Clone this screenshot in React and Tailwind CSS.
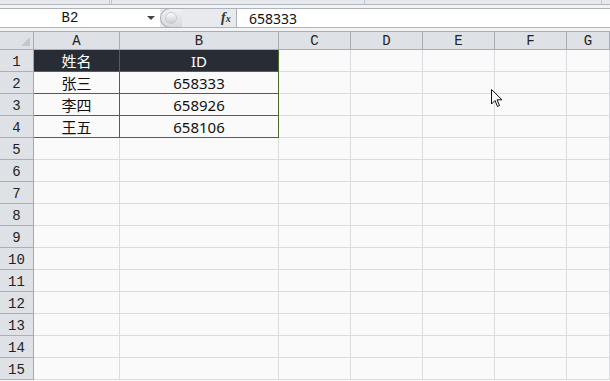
import React from "react";

const COLS = [
  { k: "A", w: "w-[86px]" },
  { k: "B", w: "w-[159px]" },
  { k: "C", w: "w-[72px]" },
  { k: "D", w: "w-[72px]" },
  { k: "E", w: "w-[72px]" },
  { k: "F", w: "w-[72px]" },
  { k: "G", w: "flex-1" },
];

const DATA = {
  1: ["姓名", "ID"],
  2: ["张三", "658333"],
  3: ["李四", "658926"],
  4: ["王五", "658106"],
};

const mono = { fontFamily: '"Liberation Mono", "DejaVu Sans Mono", monospace' };
const cjk = { fontFamily: '"Noto Sans", "Noto Sans CJK SC", sans-serif' };

function Row({ r }) {
  const inTable = r >= 1 && r <= 4;
  return (
    <div className="flex h-[22px] shrink-0">
      <div
        className="w-[34px] shrink-0 bg-[#dee2e7] border-r border-b border-r-[#a3a9b1] border-b-[#aab0b8] flex items-end justify-center pb-[1px] text-[14px] leading-[16px] text-[#222]"
        style={mono}
      >
        {r}
      </div>
      {COLS.map((c, i) => {
        const tbl = inTable && i < 2;
        const right = tbl || (inTable && i === 1);
        const bottomGreen = tbl;
        const header = r === 1 && i < 2;
        return (
          <div
            key={c.k}
            className={[
              c.w,
              "shrink-0 border-r border-b flex items-center justify-center text-[15px] leading-[20px]",
              right ? "border-r-[#4c6b26]" : "border-r-[#dadce0]",
              bottomGreen ? "border-b-[#4c6b26]" : "border-b-[#dadce0]",
              header ? "bg-[#282c34] text-white" : "bg-[#fafafa] text-[#111]",
            ].join(" ")}
            style={cjk}
          >
            {tbl ? DATA[r][i] : null}
          </div>
        );
      })}
    </div>
  );
}

export default function App() {
  const rows = Array.from({ length: 15 }, (_, i) => i + 1);
  return (
    <div className="relative w-[610px] h-[381px] overflow-hidden bg-[#fafafa] flex flex-col">
      {/* top strip */}
      <div className="h-[5px] shrink-0 bg-[#e6e8ec] border-b border-[#b3b8bf] flex">
        <div className="w-[110px] border-r border-[#c3c7cd]" />
        <div className="w-[2px] border-r border-[#c3c7cd]" />
        <div className="w-[253px] border-r border-[#c3c7cd]" />
        <div className="w-[237px] border-r border-[#c3c7cd]" />
      </div>
      <div className="h-[3px] shrink-0 bg-[#f2f3f5]" />
      {/* formula bar */}
      <div className="h-[20px] shrink-0 flex border-t border-b border-[#aeb3ba] bg-[#f5f6f7]">
        <div className="w-[160px] shrink-0 bg-white flex items-center relative">
          <span className="w-[140px] text-center text-[14px] text-[#111]" style={mono}>
            B2
          </span>
          <svg width="8" height="5" viewBox="0 0 8 5" className="absolute left-[147px] top-[7px]">
            <path d="M0 0 L8 0 L4 4 Z" fill="#444" />
          </svg>
        </div>
        <div className="w-[77px] shrink-0 relative flex items-center bg-[#e8eaed]">
          <div className="absolute left-0 top-[-1px] h-[20px] w-[22px] rounded-l-full border border-r-0 border-[#a9aeb5] bg-gradient-to-b from-[#f1f2f4] to-[#d6d9de] flex items-center pl-[4px]">
            <div className="w-[12px] h-[12px] rounded-full bg-gradient-to-b from-[#fdfdfd] to-[#c9ccd1] border border-[#c7cad0]" />
          </div>
          <span
            className="absolute left-[61px] top-[0px] text-[14px] italic font-bold text-[#333] leading-[18px]"
            style={{ fontFamily: '"Liberation Serif", serif' }}
          >
            f<span className="text-[10px]">x</span>
          </span>
          <div className="absolute right-0 top-0 bottom-0 border-r border-[#aeb3ba]" />
        </div>
        <div className="flex-1 bg-white flex items-center pl-[12px] text-[14px] text-[#111]" style={cjk}>
          658333
        </div>
      </div>
      <div className="h-[3px] shrink-0 bg-[#f2f3f5]" />
      {/* column header */}
      <div className="h-[19px] shrink-0 flex border-t border-[#a7adb5]">
        <div className="w-[34px] shrink-0 bg-[#dee2e7] border-r border-b border-[#a7adb5] relative">
          <svg width="9" height="9" viewBox="0 0 9 9" className="absolute right-[3px] bottom-[3px]">
            <path d="M9 0 L9 9 L0 9 Z" fill="#c4c8ce" />
          </svg>
        </div>
        {COLS.map((c) => (
          <div
            key={c.k}
            className={`${c.w} shrink-0 bg-[#dee2e7] border-r border-b border-[#a7adb5] flex items-center justify-center text-[14px] text-[#222] pt-[1px]`}
            style={mono}
          >
            {c.k}
          </div>
        ))}
      </div>
      {rows.map((r) => (
        <Row key={r} r={r} />
      ))}
      {/* mouse cursor */}
      <svg
        width="12"
        height="19"
        viewBox="0 0 12 19"
        className="absolute left-[491px] top-[89px]"
      >
        <path
          d="M0.5 0.5 L0.5 15 L4 11.5 L6.5 17.5 L8.5 16.5 L6 10.8 L11 10.8 Z"
          fill="#fff"
          stroke="#111"
          strokeWidth="1"
          strokeLinejoin="miter"
        />
      </svg>
    </div>
  );
}
